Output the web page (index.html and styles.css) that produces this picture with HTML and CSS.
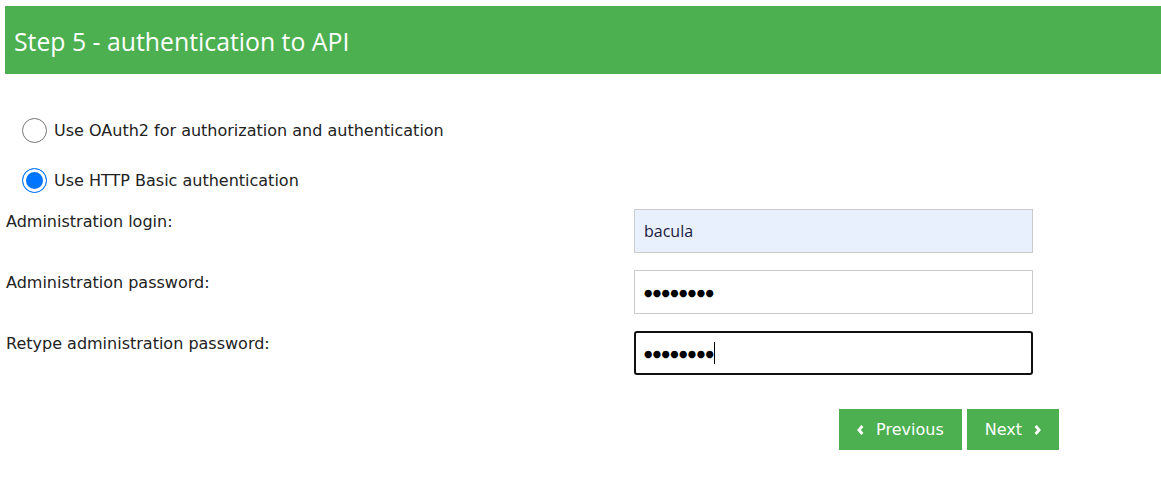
FILE: index.html
```html
<!DOCTYPE html>
<html lang="en">
<head>
<meta charset="utf-8">
<title>Step 5 - authentication to API</title>
<link rel="stylesheet" href="styles.css">
</head>
<body>
<div class="wizard">
  <h2 class="step-title">Step 5 - authentication to API</h2>
  <div class="auth-options">
    <label class="option"><input type="radio" name="auth" class="radio"> <span>Use OAuth2 for authorization and authentication</span></label>
    <label class="option"><input type="radio" name="auth" class="radio" checked> <span>Use HTTP Basic authentication</span></label>
  </div>
  <div class="fields">
    <label class="field-label" for="login">Administration login:</label>
    <div class="field-control"><input id="login" class="text-input autofilled" type="text" value="bacula"></div>
    <label class="field-label" for="pwd">Administration password:</label>
    <div class="field-control"><div id="pwd" class="text-input"><span class="dots">●●●●●●●●</span></div></div>
    <label class="field-label" for="pwd2">Retype administration password:</label>
    <div class="field-control"><div id="pwd2" class="text-input focused"><span class="dots">●●●●●●●●</span><span class="caret"></span></div></div>
  </div>
  <div class="actions">
    <button class="btn" type="button"><svg class="chev" viewBox="0 0 7 10" width="7" height="10"><path d="M5.4 1 L1.9 5 L5.4 9" fill="none" stroke="#fff" stroke-width="2.8"/></svg>Previous</button>
    <button class="btn" type="button">Next<svg class="chev" viewBox="0 0 7 10" width="7" height="10"><path d="M1.6 1 L5.1 5 L1.6 9" fill="none" stroke="#fff" stroke-width="2.8"/></svg></button>
  </div>
</div>
</body>
</html>
```
FILE: styles.css
```css
* { box-sizing: border-box; }
html, body { margin: 0; padding: 0; background: #fff; }
body {
  font-family: "DejaVu Sans", Verdana, sans-serif;
  font-size: 16px;
  color: #222;
}
.wizard { padding: 6px 0 0 5px; }
.step-title {
  margin: 0;
  height: 68px;
  background: #4caf50;
  color: #fff;
  font-family: "Open Sans", "Segoe UI", sans-serif;
  font-weight: 400;
  font-size: 24.8px;
  line-height: 70px;
  padding-left: 9px;
}
.auth-options {
  display: flex;
  flex-direction: column;
  gap: 26px;
  padding: 44px 0 0 17px;
}
.option {
  display: flex;
  align-items: center;
  gap: 7px;
  height: 24px;
}
.radio {
  appearance: none;
  -webkit-appearance: none;
  margin: 0;
  width: 25px;
  height: 25px;
  border: 1.5px solid #767676;
  border-radius: 50%;
  background: #fff;
}
.radio:checked {
  border: 1.5px solid #0075ff;
  box-shadow: inset 0 0 0 3px #fff;
  background: #0075ff;
}
.fields {
  display: grid;
  grid-template-columns: 628px 399px;
  row-gap: 17px;
  padding: 17px 0 0 1px;
}
.field-label {
  padding-top: 4px;
  line-height: 18px;
}
.text-input {
  display: flex;
  align-items: center;
  width: 399px;
  height: 44px;
  border: 1px solid #ccc;
  padding: 0 9px;
  font-family: "Open Sans", "Segoe UI", sans-serif;
  font-size: 16px;
  color: #000;
  background: #fff;
  outline: none;
  margin: 0;
}
.autofilled { background: #e8f0fe; color: #1a1a40; }
.focused {
  border: 2px solid #101010;
  border-radius: 3px;
  padding: 0 8px;
}
.dots { font-family: "DejaVu Sans", sans-serif; font-size: 9.6px; letter-spacing: 0.4px; color: #000; }
.caret { display: inline-block; width: 1px; height: 22px; background: #000; margin-left: 0; }
.actions {
  display: flex;
  justify-content: flex-end;
  gap: 5px;
  width: 1054px;
  padding-top: 34px;
}
.btn {
  display: flex;
  align-items: center;
  gap: 12px;
  height: 41px;
  border: 0;
  background: #4caf50;
  color: #fff;
  font-family: "DejaVu Sans", Verdana, sans-serif;
  font-size: 16px;
  padding: 0 18px 0 18px;
  cursor: pointer;
}
.chev { display: block; }
```
